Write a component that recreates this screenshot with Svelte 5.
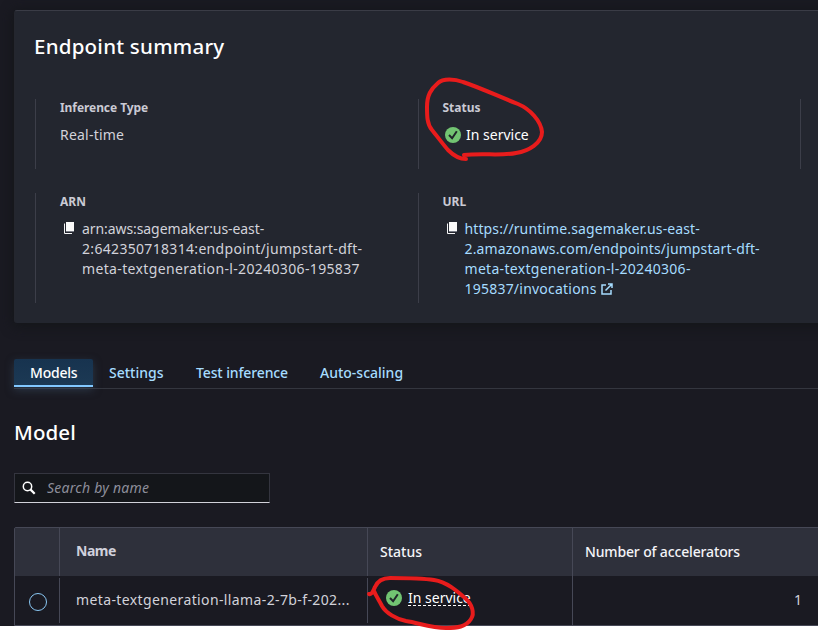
<script>
  const arn = ['arn:aws:sagemaker:us-east-', '2:642350718314:endpoint/jumpstart-dft-', 'meta-textgeneration-l-20240306-195837'];
  const url = ['https://runtime.sagemaker.us-east-', '2.amazonaws.com/endpoints/jumpstart-dft-', 'meta-textgeneration-l-20240306-'];
  const arnSpacing = [-0.08, 0.32, 0.35];
  const urlSpacing = [0.12, 0.12, 0.3];
</script>

{#snippet check()}
  <svg class="check" width="16" height="16" viewBox="0 0 16 16">
    <circle cx="8" cy="8" r="8" fill="#72c472" />
    <path d="M4 8 7.1 11.2 11.8 4.2" fill="none" stroke="#20252a" stroke-width="2" />
  </svg>
{/snippet}

{#snippet copy()}
  <svg class="copy" width="12" height="14" viewBox="0 0 12 14">
    <path d="M1.5 2.5V12.5H9" fill="none" stroke="#f4f4f6" stroke-width="1" />
    <path d="M3 1h8v10H3z" fill="#fafafa" />
    <path d="M3 10.5h8" stroke="#777a84" />
  </svg>
{/snippet}

<main>
  <section class="card">
    <h2 class="t-title">Endpoint summary</h2>
    <div class="grid first">
      <div class="cell">
        <h3 class="t-inf">Inference Type</h3>
        <p class="t-real">Real-time</p>
      </div>
      <div class="cell">
        <h3 class="t-status">Status</h3>
        <p class="service">{@render check()}<span>In service</span></p>
      </div>
      <div class="cell"></div>
    </div>
    <div class="grid second">
      <div class="cell">
        <h3>ARN</h3>
        <div class="copyrow">
          {@render copy()}
          <div>{#each arn as line, i}<p style="letter-spacing:{arnSpacing[i]}px">{line}</p>{/each}</div>
        </div>
      </div>
      <div class="cell">
        <h3 class="t-status">URL</h3>
        <div class="copyrow link">
          {@render copy()}
          <div>
            {#each url as line, i}<p style="letter-spacing:{urlSpacing[i]}px">{line}</p>{/each}
            <p class="last"><span class="t-inv">195837/invocations</span><svg width="12" height="12" viewBox="0 0 12 12"><path d="M5 2H1v9h9V7M7 1h4v4M11 1 4.5 7.5" fill="none" stroke="#a6dcff" stroke-width="1.5" /></svg></p>
          </div>
        </div>
      </div>
    </div>
  </section>

  <nav>
    <span class="tab active"><span class="t-models">Models</span></span>
    <span class="tab">Settings</span>
    <span class="tab"><span class="t-test">Test inference</span></span>
    <span class="tab">Auto-scaling</span>
  </nav>

  <h2 class="model">Model</h2>

  <div class="search">
    <svg width="14" height="14" viewBox="0 0 14 14"><circle cx="5.5" cy="5.5" r="4.2" fill="none" stroke="#fff" stroke-width="1.5" /><path d="M8.6 8.6 12.7 12.7" stroke="#fff" stroke-width="2.2" /></svg>
    <span class="t-search">Search by name</span>
  </div>

  <div class="table">
    <div class="row head">
      <div class="c0"></div>
      <div class="c1"><b class="t-name">Name</b></div>
      <div class="c2"><span>Status</span></div>
      <div class="c3"><span class="t-acc">Number of accelerators</span></div>
    </div>
    <div class="row body">
      <div class="c0 short"><i class="radio"></i></div>
      <div class="c1 short"><span class="t-meta">meta-textgeneration-llama-2-7b-f-202...</span></div>
      <div class="c2">{@render check()}<span class="dashed">In service</span></div>
      <div class="c3 num">1</div>
    </div>
  </div>

  <svg class="ink" width="818" height="632" viewBox="0 0 818 632">
    <path d="M466 159C459 159 454 156 448 150C442 143 437 136 432 130C427 124 427 116 427 107C427 95 431 89 438 83C443 78 455 79 463 82C481 88 500 97 518 104C530 109 541 121 542 132C542 143 529 151 516 153C503 156 482 153 464 155" />
    <path d="M369 594C372 595 373 591 375 587C378 580 383 578 390 578C403 578 421 578 434 580C447 582 457 591 465 598C472 604 475 613 471 619C466 627 457 628 446 628C431 628 419 623 406 621C396 619 386 613 382 606C379 600 376 596 374 591" />
  </svg>
</main>

<style>
  :global(body) { background: #fff; }
  main {
    position: relative; width: 818px; height: 632px; overflow: hidden; box-sizing: border-box;
    background: linear-gradient(#1a1a22 0 626px, #fff 626px);
    font: 14px/20px "Noto Sans", "Open Sans", sans-serif; color: #d2d2da;
    padding: 10px 0 0 14px; white-space: nowrap;
  }
  h2, h3, p { margin: 0; }
  h2 { font-weight: 500; font-size: 20.5px; line-height: 26px; padding-bottom: 2px; color: #fff; }
  .card {
    box-sizing: border-box; width: 830px; height: 313px; background: #23262f;
    border-top: 1px solid #3a3c46; border-left: 1px solid #24262e; border-radius: 3px;
    padding: 22px 0 0 20px; box-shadow: 0 2px 12px 2px #14161a;
  }
  .card h2 { margin-left: -1px; }
  .t-title { letter-spacing: .23px; }
  .t-inf { letter-spacing: -.07px; }
  .t-real { letter-spacing: .22px; }
  .t-status { margin-left: -.5px; }
  .t-inv { letter-spacing: .22px; }
  .t-models { letter-spacing: -.22px; }
  .t-test { letter-spacing: -.12px; }
  .t-search { letter-spacing: .25px; }
  .t-name { letter-spacing: -.5px; padding-bottom: 2px; }
  .t-acc { letter-spacing: -.15px; }
  .t-meta { letter-spacing: .38px; }
  .grid { display: grid; grid-template-columns: 383px 382px 100px; }
  .first { margin-top: 38px; height: 70px; }
  .second { margin-top: 24px; height: 110px; }
  .cell { border-left: 1px solid #3c3e49; padding-left: 24px; }
  .second { grid-template-columns: 383px 382px; }
  h3 { font-size: 12px; line-height: 18px; font-weight: 700; color: #cacad4; }
  .cell > p { margin-top: 8px; }
  .service { display: flex; align-items: center; color: #fff; gap: 5px; padding-left: 2px; }
  .check { flex: none; display: block; }
  .copyrow { display: flex; margin-top: 8px; gap: 7px; }
  .copyrow > svg { margin: 2px 0 0 3px; flex: none; }
  .link { color: #a6dcff; gap: 6.5px; }
  .last { display: flex; align-items: center; gap: 4.5px; }

  nav { display: flex; margin-top: 36px; height: 29px; border-bottom: 1px solid #34363f; color: #a6dcff; }
  .tab { height: 28px; line-height: 28px; padding: 0 16px; box-sizing: border-box; font-weight: 500; }
  .active { width: 79px; color: #fff; background: linear-gradient(#17334f, #1c3954); border-bottom: 2px solid #82c8ff; border-radius: 2px 2px 0 0; box-shadow: 0 3px 9px #3a506788; }
  .tab:nth-child(2) { width: 87px; }
  .tab:nth-child(3) { width: 124px; }
  .model { margin-top: 30px; letter-spacing: .1px; }
  .search {
    display: flex; align-items: center; box-sizing: border-box; width: 256px; height: 30px; margin-top: 26px;
    background: #14161a; border: 1px solid #34353f; border-bottom-color: #d2d2da; padding-left: 7px; gap: 11px;
    font-style: italic; color: #8d8e9a;
  }
  .table { box-sizing: border-box; width: 830px; height: 99px; margin-top: 24px; border: 1px solid #464856; border-top-left-radius: 2px; }
  .row { display: grid; grid-template-columns: 45px 308px 205px 271px; }
  .row > div { display: flex; align-items: center; box-sizing: border-box; }
  .head { height: 48px; background: #2e303b; color: #f4f4f8; font-weight: 500; }
  .body { height: 49px; }
  .row .c0, .row .c1, .row .c2 { border-right: 1px solid #464856; }
  .row .c1 { padding-left: 16px; }
  .row .c2, .row .c3 { padding-left: 12px; }
  .head .c1 { color: #d0d0dc; }
  .row .short { height: 45px; margin-top: 2px; padding-bottom: 1px; }
  .radio { box-sizing: border-box; width: 18px; height: 18px; border: 1px solid #8ac8f4; border-radius: 50%; margin: 3px 0 0 14px; }
  .body .c2 { padding: 0 0 5px 18px; gap: 6px; color: #fff; }
  .dashed { border-bottom: 1px dashed #fff; line-height: 15px; }
  .body .num { justify-content: flex-end; padding-right: 42px; padding-bottom: 1px; }
  .ink { position: absolute; left: 0; top: 0; fill: none; stroke: #e81c1c; stroke-width: 4; stroke-linecap: round; stroke-linejoin: round; }
</style>
